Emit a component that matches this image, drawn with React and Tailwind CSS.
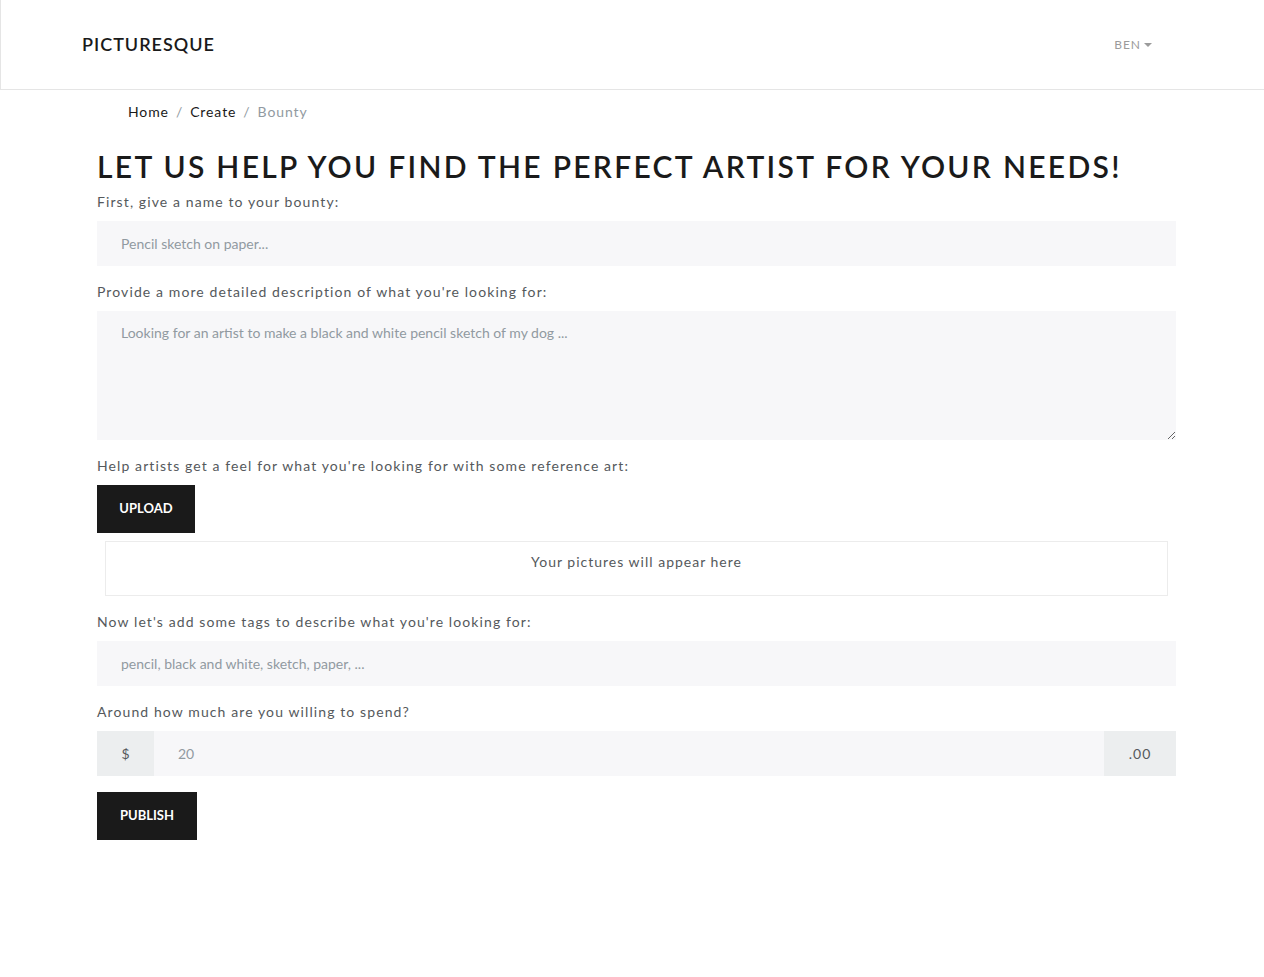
import React from "react";

const font = { fontFamily: "Lato, 'Open Sans', 'Liberation Sans', sans-serif" };

function Label({ children, className = "" }) {
  return (
    <div className={"text-[14px] leading-[20px] tracking-[1.1px] text-[#55595c] " + className}>{children}</div>
  );
}

export default function App() {
  return (
    <div className="min-h-[977px] bg-white" style={font}>
      <nav className="h-[90px] border-b border-l border-[#e5e5e5] flex items-center justify-between pl-[81px] pr-[112px]">
        <div className="text-[18px] tracking-[1px] font-semibold text-[#1a1a1a]">PICTURESQUE</div>
        <div className="flex items-center text-[12px] tracking-[1px] text-[#9b9b9b]">
          BEN
          <span className="ml-[3px] inline-block w-0 h-0 border-l-[4px] border-r-[4px] border-t-[4px] border-l-transparent border-r-transparent border-t-[#9b9b9b]" />
        </div>
      </nav>
      <main className="pl-[97px] pr-[88px]">
        <div className="flex items-center gap-[7px] pl-[31px] pt-[5px] h-[37px] text-[14px] tracking-[0.9px] text-[#1a1a1a]">
          <span>Home</span>
          <span className="text-[#919aa1]">/</span>
          <span>Create</span>
          <span className="text-[#919aa1]">/</span>
          <span className="text-[#919aa1]">Bounty</span>
        </div>
        <h1 className="mt-[23px] whitespace-nowrap text-[30px] leading-[32px] font-semibold tracking-[2.3px] text-[#1a1a1a]">
          LET US HELP YOU FIND THE PERFECT ARTIST FOR YOUR NEEDS!
        </h1>
        <Label className="mt-[10px]">First, give a name to your bounty:</Label>
        <input
          className="mt-[9px] w-full h-[45px] bg-[#f7f7f9] px-[24px] text-[14px] text-[#55595c] placeholder-[#919aa1] outline-none"
          placeholder="Pencil sketch on paper..."
        />
        <Label className="mt-[16px]">Provide a more detailed description of what you're looking for:</Label>
        <textarea
          className="mt-[9px] block w-full h-[129px] bg-[#f7f7f9] px-[24px] py-[11px] text-[14px] text-[#55595c] placeholder-[#919aa1] outline-none"
          placeholder="Looking for an artist to make a black and white pencil sketch of my dog ..."
        />
        <Label className="mt-[16px]">Help artists get a feel for what you're looking for with some reference art:</Label>
        <button className="mt-[9px] w-[98px] h-[48px] bg-[#1a1a1a] text-white text-[13px] font-bold">UPLOAD</button>
        <div className="mt-[8px] mx-[8px] h-[55px] border border-[#ececec] flex justify-center pt-[9px] text-[14px] tracking-[1px] text-[#55595c]">
          Your pictures will appear here
        </div>
        <Label className="mt-[16px]">Now let's add some tags to describe what you're looking for:</Label>
        <input
          className="mt-[9px] w-full h-[45px] bg-[#f7f7f9] px-[24px] text-[14px] text-[#55595c] placeholder-[#919aa1] outline-none"
          placeholder="pencil, black and white, sketch, paper, ..."
        />
        <Label className="mt-[16px]">Around how much are you willing to spend?</Label>
        <div className="mt-[9px] flex h-[45px]">
          <div className="w-[57px] bg-[#eceeef] flex items-center justify-center text-[14px] text-[#55595c]">$</div>
          <input
            className="flex-1 bg-[#f7f7f9] px-[24px] text-[14px] text-[#55595c] placeholder-[#919aa1] outline-none"
            placeholder="20"
          />
          <div className="w-[72px] bg-[#eceeef] flex items-center justify-center text-[14px] tracking-[1px] text-[#55595c]">.00</div>
        </div>
        <button className="mt-[16px] w-[100px] h-[48px] bg-[#1a1a1a] text-white text-[13px] font-bold">PUBLISH</button>
      </main>
    </div>
  );
}
